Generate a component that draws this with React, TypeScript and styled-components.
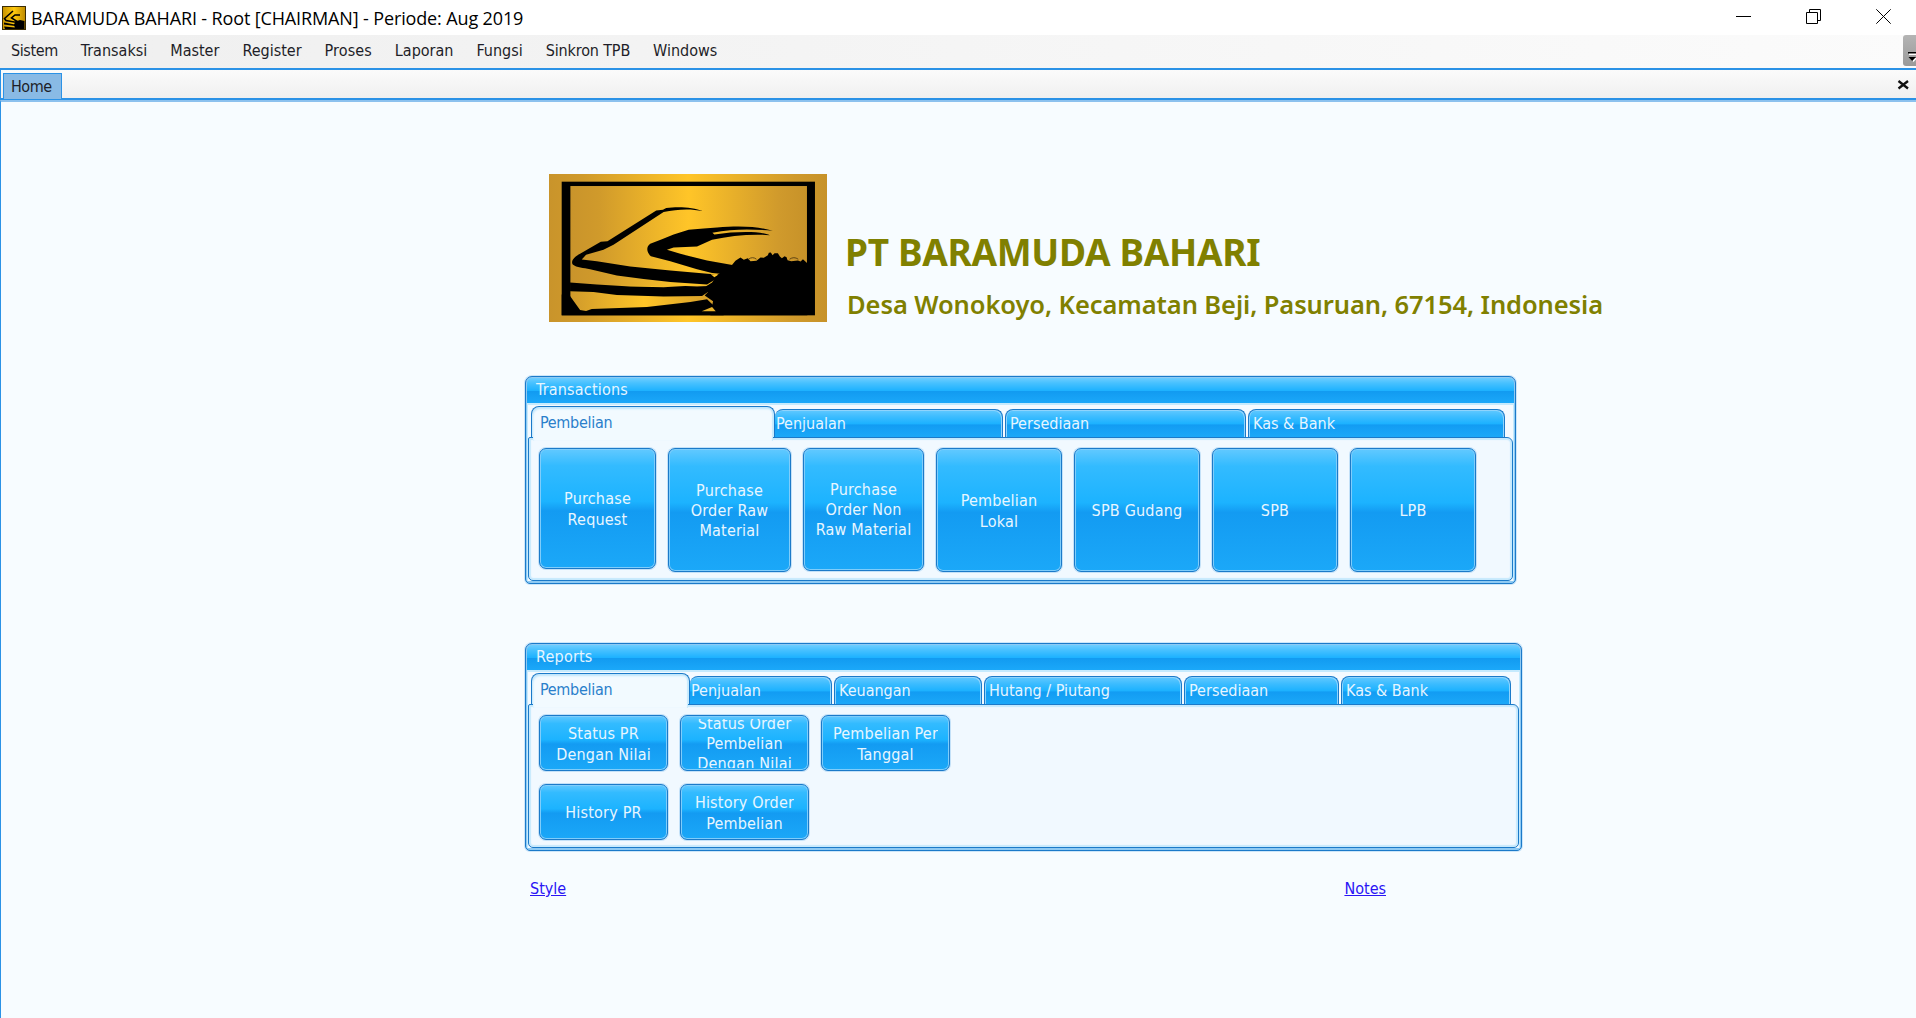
import React from "react";
import styled, { createGlobalStyle, css } from "styled-components";

const uiFont = '"DejaVu Sans Condensed", "DejaVu Sans", sans-serif';

const GlobalStyle = createGlobalStyle`
  * { box-sizing: border-box; }
  body { margin: 0; overflow: hidden; background: #f7fcff; font-family: ${uiFont}; font-size: 16px; }
`;

const Window = styled.div`
  display: flex;
  flex-direction: column;
  width: 1916px;
  height: 1018px;
  color: #1e1e28;
`;

const TitleBar = styled.header`
  display: flex;
  align-items: center;
  height: 35px;
  padding: 0 25px 0 2px;
  background: #fff;
`;

const TitleText = styled.h1`
  flex: 1;
  margin: 0 0 0 5px;
  padding-top: 1px;
  font: 400 18px/34px "Open Sans", sans-serif;
  letter-spacing: -0.13px;
  color: #000;
`;

const WindowControls = styled.div`
  display: flex;
  gap: 55px;
  padding-bottom: 2px;
`;

const MenuBar = styled.nav`
  display: flex;
  height: 33px;
  padding-left: 11px;
  background: linear-gradient(to right, #efefef, #fbfbfb);
`;

const MenuList = styled.div`
  display: flex;
  flex: 1;
  gap: 23px;
  line-height: 32px;
`;

const MenuItem = styled.span<{ $tracking?: number }>`
  letter-spacing: ${(p) => p.$tracking ?? 0}px;
  white-space: nowrap;
`;

const MenuOverflow = styled.div`
  display: flex;
  align-items: flex-end;
  width: 13px;
  height: 31px;
  padding: 0 0 4px 4px;
  overflow: hidden;
  background: linear-gradient(#b4b4b4, #9a9a9a);
  border-radius: 3px 0 0 3px;
`;

const TabStrip = styled.div`
  display: flex;
  justify-content: space-between;
  height: 32px;
  padding: 3px 6px 0 2px;
  border-top: 2px solid #2b92e6;
  border-bottom: 2px solid #2b92e6;
  border-left: 1px solid #2b92e6;
  background: linear-gradient(#fbfbfb, #f0f0f0);
`;

const DocumentTab = styled.div`
  width: 59px;
  height: 26px;
  padding-left: 7px;
  border: solid #2b92e6;
  border-width: 1px 1px 0;
  background: #89bae5;
  line-height: 26px;
  letter-spacing: -0.5px;
`;

const CloseTab = styled.div`
  padding-top: 3px;
`;

const Workspace = styled.main`
  display: flex;
  flex: 1;
  flex-direction: column;
  padding: 72px 0 0 524px;
  border-top: 2px solid #8cc1ee;
  border-left: 1px solid #2b92e6;
`;

const Company = styled.section`
  display: flex;
  height: 202px;
  padding-left: 24px;
`;

const Logo = styled.svg`
  width: 278px;
  height: 148px;
`;

const CompanyText = styled.div`
  display: flex;
  flex-direction: column;
  padding: 53px 0 0 19px;
  font-family: "Noto Sans", sans-serif;
  color: #808000;
  white-space: nowrap;
`;

const CompanyName = styled.h2`
  margin: 0 0 0 -1px;
  font-size: 37px;
  line-height: 50px;
  font-weight: 700;
  letter-spacing: -0.33px;
`;

const CompanyAddress = styled.p`
  margin: 9px 0 0 1px;
  font-size: 25.5px;
  line-height: 36px;
  font-weight: 650;
  letter-spacing: -0.09px;
`;

const edge = "#1b7ac9";

const Panel = styled.section<{ $width: number }>`
  display: flex;
  flex-direction: column;
  width: ${(p) => p.$width}px;
  height: 208px;
  margin-bottom: 59px;
  padding: 1px 1px 2px;
  border: 1px solid ${edge};
  border-radius: 7px 7px 5px 5px;
  background: #8fcaf3;
  box-shadow: 0 0 0 1px rgba(110, 180, 235, 0.3);
`;

const PanelHeader = styled.div`
  height: 25px;
  padding-left: 9px;
  border-radius: 5px 5px 0 0;
  background: linear-gradient(#6dcdff 0, #48c1ff 20%, #1eb2ff 50%, #129bf1 54%, #1ba8f9 100%);
  color: #e6f5ff;
  line-height: 24px;
  letter-spacing: 0.2px;
`;

const PanelBody = styled.div`
  display: flex;
  flex: 1;
  flex-direction: column;
  padding-top: 1px;
  border: solid #c5eafd;
  border-width: 2px 1px 0;
  background: #f4faff;
`;

const TabRow = styled.div`
  display: flex;
  flex: none;
  align-items: flex-end;
  height: 31px;
  padding-left: 3px;
`;

const ActiveTab = styled.div<{ $width: number }>`
  position: relative;
  z-index: 1;
  flex: none;
  width: ${(p) => p.$width}px;
  height: 35px;
  margin-bottom: -4px;
  padding-left: 8px;
  border: solid ${edge};
  border-width: 1px 1px 0;
  border-radius: 8px 8px 0 0;
  background: #f2faff;
  box-shadow: inset 1px 2px 2px #bfe6fc, inset -2px 0 1px #c8eafd;
  clip-path: polygon(0 0, 100% 0, 100% 31px, calc(100% - 2px) 31px, calc(100% - 2px) 100%, 2px 100%, 2px 31px, 0 31px);
  color: #2a7fcb;
  line-height: 31px;
  letter-spacing: -0.3px;
`;

const Tab = styled.div<{ $width: number; $joined?: boolean }>`
  flex: none;
  width: ${(p) => p.$width}px;
  height: 28px;
  margin-left: ${(p) => (p.$joined ? 0 : 2)}px;
  padding-left: ${(p) => (p.$joined ? 1 : 4)}px;
  border: 1px solid ${edge};
  border-bottom: 0;
  border-left-width: ${(p) => (p.$joined ? 0 : 1)}px;
  border-radius: 8px 8px 0 0;
  background: linear-gradient(#62c9ff 0, #3cbcff 25%, #1db2ff 50%, #129cf3 56%, #1ba8f8 100%);
  box-shadow: inset -1px 1px 0 #8fd4fd, inset ${(p) => (p.$joined ? 0 : 1)}px 0 0 #8fd4fd;
  color: #e6f5ff;
  line-height: 28px;
`;

const TabPage = styled.div`
  display: flex;
  flex: 1;
  flex-direction: column;
  gap: 13px;
  padding: 10px 0 0 10px;
  border: 1px solid ${edge};
  border-radius: 2px 6px 5px 5px;
  background: #f1f9ff;
  box-shadow: inset 0 0 1px 2px #c6e9fd;
`;

const ButtonRow = styled.div`
  display: flex;
  align-items: flex-start;
  gap: 12px;
`;

const buttonFace = css`
  border: 1px solid ${edge};
  border-radius: 7px;
  background: linear-gradient(#62c9ff 0, #33bbff 14%, #1cb3ff 44%, #139bf2 52%, #1ba8f8 100%);
  box-shadow: inset 0 0 0 1px #7fcdfb, 0 0 0 1px rgba(110, 180, 235, 0.35);
`;

const LaunchButton = styled.button<{ $width: number; $height: number }>`
  ${buttonFace}
  display: flex;
  align-items: center;
  justify-content: center;
  width: ${(p) => p.$width}px;
  height: ${(p) => p.$height}px;
  padding: 1px 0 0;
  color: #e8f6ff;
  font: 16px ${uiFont};
`;

const ButtonLabel = styled.span<{ $lines: number }>`
  display: flex;
  flex-direction: column;
  justify-content: center;
  max-height: calc(100% - 4px);
  overflow: hidden;
  line-height: ${(p) => (p.$lines > 2 ? 20 : 21)}px;
  letter-spacing: 0.2px;
  white-space: nowrap;
`;

const Links = styled.footer`
  display: flex;
  justify-content: space-between;
  width: 861px;
  margin-top: -33px;
  padding-left: 5px;
`;

const Link = styled.a`
  color: #2a14f5;
  line-height: 24px;
  text-decoration: underline;
`;

const CrabLogo = () => (
  <Logo viewBox="57 43 832 443" preserveAspectRatio="none">
    <defs>
      <linearGradient id="gold">
        <stop offset="0" stopColor="#c9942b" />
        <stop offset="0.12" stopColor="#d09a2b" />
        <stop offset="0.5" stopColor="#ffc528" />
        <stop offset="0.88" stopColor="#d09a2c" />
        <stop offset="1" stopColor="#c79229" />
      </linearGradient>
      <linearGradient id="goldLow">
        <stop offset="0" stopColor="#d09a2b" />
        <stop offset="0.5" stopColor="#ffc528" />
        <stop offset="1" stopColor="#d39c2b" />
      </linearGradient>
    </defs>
    <rect x="57" y="43" width="832" height="443" fill="url(#gold)" />
    <rect x="95" y="66" width="758" height="400" />
    <rect x="121" y="79" width="708" height="300" fill="url(#gold)" />
    <rect x="121" y="378" width="440" height="76" fill="url(#goldLow)" />
    <path d="M517 154C490 142 440 140 408 145L398 150L378 152L232 244L212 246L150 282C130 292 122 305 128 314C140 324 160 324 180 328L260 347L340 357L420 366L530 374L570 349L540 342L420 332L300 320L200 304L155 299L168 285L220 270L250 255L400 157C440 148 480 146 517 154Z" />
    <path d="M727 213C690 202 640 196 560 203L520 206L475 210L430 224L395 238L360 252C346 262 350 280 362 289L420 304L500 328L545 339L610 345L610 316L530 302L450 282L410 270L430 263L500 260L545 240C600 228 660 222 718 226C690 214 620 214 552 224L546 219C610 206 670 208 727 213Z" />
    <path d="M545 368L560 345L604 316L615 303L630 293L640 300L652 295L660 304L678 303L690 293L700 294L712 286L715 279L721 278L726 286L732 280L742 280L748 290L754 295L762 289L768 292L771 301L782 304L802 302L810 305L817 298L830 310V466H540L548 424L523 407L533 396L527 379Z" />
    <path d="M654 298Q666 289 678 298M777 298Q790 289 803 298" fill="none" stroke="#4b3510" strokeWidth="2.5" />
    <path d="M120 368L200 374L300 380L400 382L465 378L500 380L535 378L535 395L515 408L400 410L260 405L190 396L120 394Z" />
    <path d="M120 408L150 450L168 453L185 447L350 441L480 426L530 418L580 466H95V404Z" />
    <path d="M514 454L545 441L556 454Z" fill="#eab42b" />
    <path d="M541 343L562 345L552 352Z" fill="#fdc52b" />
  </Logo>
);

const AppIcon = () => (
  <svg width="24" height="24" viewBox="0 0 24 24">
    <defs>
      <linearGradient id="appGold">
        <stop offset="0" stopColor="#c89400" />
        <stop offset="0.5" stopColor="#ffc90e" />
        <stop offset="1" stopColor="#c08c00" />
      </linearGradient>
    </defs>
    <rect width="24" height="24" fill="#3a2c05" />
    <rect x="1" y="1" width="22" height="22" fill="url(#appGold)" />
    <path d="M11 5L2.5 12.5L4 14.5L15 16.5M18 9L13 9L9.5 12L16 16" fill="none" stroke="#000" strokeWidth="1.6" />
    <path d="M2 16.5L13 18.5V20L2 18.5ZM2 20.5L13 21.5L22 23H3Z" />
    <path d="M12 18L15 15L18 14L22.5 15V23H13Z" />
  </svg>
);

const transactionTabs = [
  { label: "Penjualan", width: 228 },
  { label: "Persediaan", width: 241 },
  { label: "Kas & Bank", width: 257 },
];

const transactionButtons = [
  { lines: ["Purchase", "Request"], width: 117, height: 121 },
  { lines: ["Purchase", "Order Raw", "Material"], width: 123, height: 124 },
  { lines: ["Purchase", "Order Non", "Raw Material"], width: 121, height: 123 },
  { lines: ["Pembelian", "Lokal"], width: 126, height: 124 },
  { lines: ["SPB Gudang"], width: 126, height: 124 },
  { lines: ["SPB"], width: 126, height: 124 },
  { lines: ["LPB"], width: 126, height: 124 },
];

const reportTabs = [
  { label: "Penjualan", width: 142 },
  { label: "Keuangan", width: 148 },
  { label: "Hutang / Piutang", width: 198 },
  { label: "Persediaan", width: 155 },
  { label: "Kas & Bank", width: 170 },
];

const reportRows = [
  [["Status PR", "Dengan Nilai"], ["Status Order", "Pembelian", "Dengan Nilai"], ["Pembelian Per", "Tanggal"]],
  [["History PR"], ["History Order", "Pembelian"]],
];

type LaunchProps = { lines: string[]; width: number; height: number };

const Launch = ({ lines, width, height }: LaunchProps) => (
  <LaunchButton $width={width} $height={height}>
    <ButtonLabel $lines={lines.length}>
      {lines.map((line) => (
        <span key={line}>{line}</span>
      ))}
    </ButtonLabel>
  </LaunchButton>
);

type GroupProps = {
  title: string;
  width: number;
  activeWidth: number;
  tabs: { label: string; width: number }[];
  children: React.ReactNode;
};

const Group = ({ title, width, activeWidth, tabs, children }: GroupProps) => (
  <Panel $width={width}>
    <PanelHeader>{title}</PanelHeader>
    <PanelBody>
      <TabRow>
        <ActiveTab $width={activeWidth}>Pembelian</ActiveTab>
        {tabs.map((tab, i) => (
          <Tab key={tab.label} $width={tab.width} $joined={i === 0}>
            {tab.label}
          </Tab>
        ))}
      </TabRow>
      <TabPage>{children}</TabPage>
    </PanelBody>
  </Panel>
);

export default function App() {
  return (
    <Window>
      <GlobalStyle />
      <TitleBar>
        <AppIcon />
        <TitleText>BARAMUDA BAHARI - Root [CHAIRMAN] - Periode: Aug 2019</TitleText>
        <WindowControls>
          <svg width="15" height="15" stroke="#000" fill="none">
            <path d="M0 7.5H15" />
          </svg>
          <svg width="15" height="15" stroke="#000" fill="none">
            <path d="M0.5 3.5H11.5V14.5H0.5ZM3.5 3V0.5H14.5V11.5H12" />
          </svg>
          <svg width="15" height="15" stroke="#000" fill="none">
            <path d="M0.3 0.3L14.7 14.7M14.7 0.3L0.3 14.7" />
          </svg>
        </WindowControls>
      </TitleBar>
      <MenuBar>
        <MenuList>
          <MenuItem $tracking={-0.4}>Sistem</MenuItem>
          <MenuItem>Transaksi</MenuItem>
          <MenuItem>Master</MenuItem>
          <MenuItem>Register</MenuItem>
          <MenuItem $tracking={0.1}>Proses</MenuItem>
          <MenuItem>Laporan</MenuItem>
          <MenuItem>Fungsi</MenuItem>
          <MenuItem $tracking={-0.15}>Sinkron TPB</MenuItem>
          <MenuItem>Windows</MenuItem>
        </MenuList>
        <MenuOverflow>
          <svg width="10" height="10">
            <path d="M2 1H11V3H2ZM3 6H10L6.5 10Z" fill="#fff" />
            <path d="M1 0H9V1.5H1ZM1.5 5H9L5.2 9Z" fill="#000" />
          </svg>
        </MenuOverflow>
      </MenuBar>
      <TabStrip>
        <DocumentTab>Home</DocumentTab>
        <CloseTab>
          <svg width="13" height="13" viewBox="0 0 13 13">
            <path d="M1.5 3L11 10.5M11 3L1.5 10.5" fill="none" stroke="#111" strokeWidth="2.3" />
          </svg>
        </CloseTab>
      </TabStrip>
      <Workspace>
        <Company>
          <CrabLogo />
          <CompanyText>
            <CompanyName>PT BARAMUDA BAHARI</CompanyName>
            <CompanyAddress>Desa Wonokoyo, Kecamatan Beji, Pasuruan, 67154, Indonesia</CompanyAddress>
          </CompanyText>
        </Company>
        <Group title="Transactions" width={991} activeWidth={244} tabs={transactionTabs}>
          <ButtonRow>
            {transactionButtons.map((b, i) => (
              <Launch key={i} {...b} />
            ))}
          </ButtonRow>
        </Group>
        <Group title="Reports" width={997} activeWidth={159} tabs={reportTabs}>
          {reportRows.map((row, r) => (
            <ButtonRow key={r}>
              {row.map((lines) => (
                <Launch key={lines[0]} lines={lines} width={129} height={56} />
              ))}
            </ButtonRow>
          ))}
        </Group>
        <Links>
          <Link>Style</Link>
          <Link>Notes</Link>
        </Links>
      </Workspace>
    </Window>
  );
}
